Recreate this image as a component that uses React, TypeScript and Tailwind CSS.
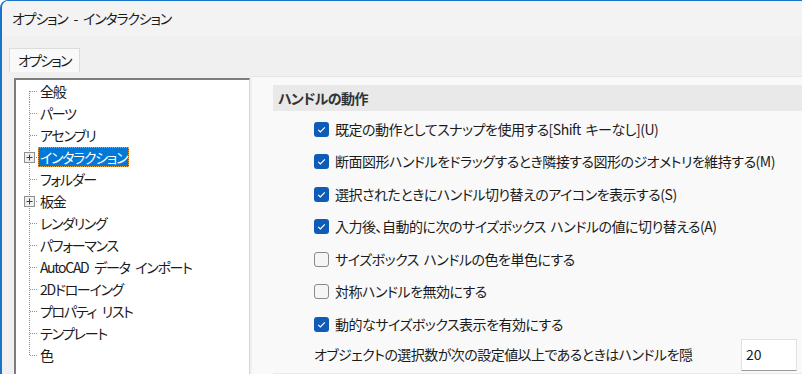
import React from 'react';

const font = "font-['Noto_Sans_CJK_JP','Noto_Sans',sans-serif] [font-feature-settings:'palt']";

const treeItems = [
  { label: '全般' },
  { label: 'パーツ' },
  { label: 'アセンブリ' },
  { label: 'インタラクション', expander: true, selected: true },
  { label: 'フォルダー' },
  { label: '板金', expander: true },
  { label: 'レンダリング' },
  { label: 'パフォーマンス' },
  { label: 'AutoCAD データ インポート' },
  { label: '2Dドローイング' },
  { label: 'プロパティ リスト' },
  { label: 'テンプレート' },
  { label: '色' },
];

const options = [
  { label: '既定の動作としてスナップを使用する[Shift キーなし](U)', checked: true },
  { label: '断面図形ハンドルをドラッグするとき隣接する図形のジオメトリを維持する(M)', checked: true },
  { label: '選択されたときにハンドル切り替えのアイコンを表示する(S)', checked: true },
  { label: '入力後、自動的に次のサイズボックス ハンドルの値に切り替える(A)', checked: true },
  { label: 'サイズボックス ハンドルの色を単色にする', checked: false },
  { label: '対称ハンドルを無効にする', checked: false },
  { label: '動的なサイズボックス表示を有効にする', checked: true },
];

// dotted connector + optional [+] box for one tree row
function Connector({ first, last, expander }: { first: boolean; last: boolean; expander?: boolean }) {
  return (
    <svg width="22" height="22" className="shrink-0">
      <line x1="13.5" y1={first ? 11 : 0} x2="13.5" y2={last ? 11 : 22} stroke="#8c8c8c" strokeDasharray="1 1" />
      <line x1="14" y1="11.5" x2="22" y2="11.5" stroke="#8c8c8c" strokeDasharray="1 1" />
      {expander && (
        <g>
          <rect x="8.5" y="6.5" width="10" height="10" fill="#efefef" stroke="#8e8f8f" />
          <line x1="10.5" y1="11.5" x2="16.5" y2="11.5" stroke="#2b3f6e" />
          <line x1="13.5" y1="8.5" x2="13.5" y2="14.5" stroke="#2b3f6e" />
        </g>
      )}
    </svg>
  );
}

function CheckBox({ checked }: { checked: boolean }) {
  if (!checked) {
    return <span className="w-[15px] h-[15px] shrink-0 rounded-[3px] border border-[#8a8a8a] bg-[#f5f5f5]" />;
  }
  return (
    <span className="w-[15px] h-[15px] shrink-0 rounded-[3px] bg-[#0f5cb8] flex items-center justify-center">
      <svg width="11" height="11" viewBox="0 0 11 11">
        <path d="M2.2 5.8 L4.4 8 L8.8 3.4" fill="none" stroke="white" strokeWidth="1.2" />
      </svg>
    </span>
  );
}

export default function App() {
  return (
    <div className={`w-[802px] h-[374px] overflow-hidden bg-[#f0f0f0] border-l-2 border-t border-[#1b73c9] rounded-tl-[8px] text-[#1b1b1b] ${font}`}>
      <div className="h-[35px] bg-[#f3f3f3] flex items-center pl-[10px] text-[14px] tracking-[-1.2px] [word-spacing:4px]">
        オプション - インタラクション
      </div>

      <div className="pt-[12px] pl-[7px] flex">
        <div className="h-[24px] px-[8px] flex items-center bg-[#f9f9f9] border border-b-0 border-[#dcdcdc] text-[14px] tracking-[-1.8px]">
          オプション
        </div>
      </div>

      <div className="flex items-start">
        <div className="ml-[12px] mt-[6px] w-[236px] h-[300px] bg-white border-t-2 border-l-2 border-t-[#7d7d7d] border-l-[#7d7d7d] border-r border-r-[#d6d6d6] text-[14px] tracking-[-1.3px] [word-spacing:4px]">
          {treeItems.map((it, i) => (
            <div key={it.label} className="h-[22px] flex items-center">
              <Connector first={i === 0} last={i === treeItems.length - 1} expander={it.expander} />
              <span
                className={
                  it.selected
                    ? 'px-[1px] leading-[18px] bg-[#0078d7] text-white border border-dotted border-[#f0a040]'
                    : 'px-[2px] leading-[18px] whitespace-nowrap'
                }
              >
                {it.label}
              </span>
            </div>
          ))}
        </div>

        <div className="ml-[2px] mt-[4px] flex-1 h-[300px] bg-[#f9f9f9] border-t border-[#e4e4e4] pl-[21px] pt-[8px]">
          <div className="h-[26px] bg-[#e9e9e9] flex items-center pl-[5px] text-[14px] font-bold text-[#333333] tracking-[-0.6px]">
            ハンドルの動作
          </div>
          <div className="pt-[2px] text-[14px] tracking-[-0.5px] [word-spacing:2px]">
            {options.map(o => (
              <div key={o.label} className="h-[32.5px] flex items-center pl-[41px] gap-[6px] whitespace-nowrap">
                <CheckBox checked={o.checked} />
                <span>{o.label}</span>
              </div>
            ))}
            <div className="h-[32px] -mt-[2px] flex items-center justify-between pl-[41px] pr-[5px] tracking-[-0.55px]">
              <span className="whitespace-nowrap">オブジェクトの選択数が次の設定値以上であるときはハンドルを隠</span>
              <div className="w-[56px] h-[32px] bg-white border border-[#e2e2e2] border-b-[#9a9a9a] flex items-start pl-[4px] pt-[4px] tracking-normal">
                20
              </div>
            </div>
            <div className="h-[8px] mt-[2px] bg-[#eaeaea]" />
          </div>
        </div>
      </div>
    </div>
  );
}
